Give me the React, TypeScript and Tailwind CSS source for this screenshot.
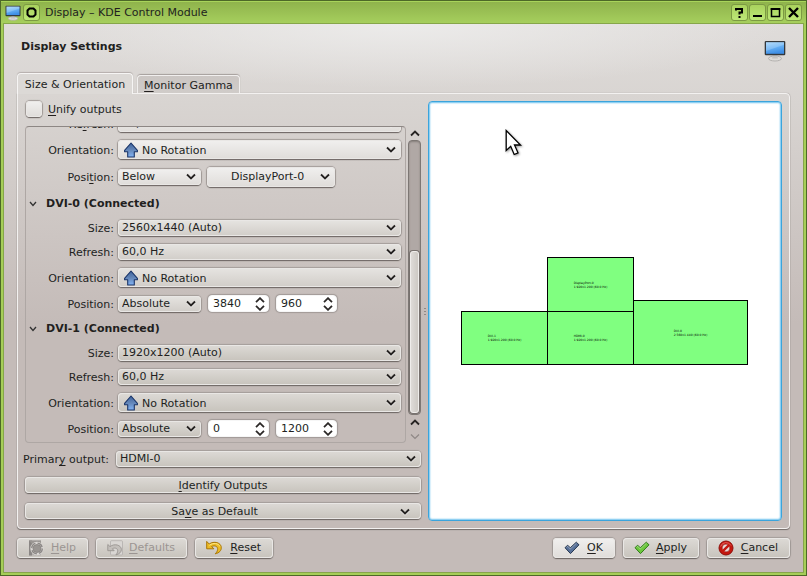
import React from "react";

const light = "bg-linear-to-b from-[#f1f0ef] to-[#dfdcd9]";
const mid = "bg-linear-to-b from-[#e6e4e1] to-[#d1cdc8]";
const dark = "bg-linear-to-b from-[#dddad6] to-[#c7c3bc]";
const raised =
  "rounded-[4px] shadow-[inset_0_0_0_1px_#e9e7e5,0_1px_1px_#6f6865,0_0_1px_1px_#a59e9b]";

const Key = ({ children }: { children: React.ReactNode }) => (
  <span className="underline underline-offset-2">{children}</span>
);

const Chevron = ({ className = "" }: { className?: string }) => (
  <svg viewBox="0 0 10 8" className={`h-2 w-[10px] shrink-0 ${className}`}>
    <path d="M1 2.5 5 6.3 9 2.5" fill="none" stroke="#fff" strokeOpacity="0.6" strokeWidth="2" />
    <path d="M1 1.5 5 5.5 9 1.5" fill="none" stroke="#262322" strokeWidth="1.8" />
  </svg>
);

const MonitorIcon = ({ className }: { className: string }) => (
  <svg viewBox="0 0 22 22" className={className}>
    <defs>
      <linearGradient id="screen" x1="0" y1="0" x2="0.3" y2="1">
        <stop offset="0" stopColor="#9fd2fb" />
        <stop offset="0.5" stopColor="#6ab3f5" />
        <stop offset="1" stopColor="#3f8fe6" />
      </linearGradient>
    </defs>
    <ellipse cx="11" cy="18.5" rx="6.5" ry="2.5" fill="#dddbd9" stroke="#aaa7a5" strokeWidth="0.8" />
    <path d="M9 15h4l1 3.5H8z" fill="#c4c2c0" />
    <rect x="0.7" y="0.9" width="20.6" height="14.4" rx="1.2" fill="#34383c" />
    <rect x="2" y="2.2" width="18" height="11.6" fill="url(#screen)" />
    <path d="M2 2.2h18v2.6L2 11z" fill="#fff" fillOpacity="0.2" />
  </svg>
);

const ArrowUp = () => (
  <svg viewBox="0 0 14 16" className="pointer-events-none absolute left-[6px] top-[2px] h-4 w-[14px]">
    <defs>
      <linearGradient id="arrow" x1="0" y1="0" x2="0" y2="1">
        <stop offset="0" stopColor="#3e629c" />
        <stop offset="0.5" stopColor="#6487b9" />
        <stop offset="1" stopColor="#83b4f5" />
      </linearGradient>
    </defs>
    <path
      d="M7 1 13.4 8.3v1.5H10.3v5.2H3.7V9.8H.6V8.3z"
      fill="url(#arrow)"
      stroke="#1b3568"
      strokeWidth="1.1"
      strokeLinejoin="round"
    />
  </svg>
);

type ComboProps = {
  id: string;
  value: string;
  tone: string;
  size?: string;
  arrow?: boolean;
};

const Combo = ({ id, value, tone, size = "h-4 flex-1", arrow }: ComboProps) => (
  <div className={`relative ${size}`}>
    <select
      id={id}
      defaultValue={value}
      className={`block h-full w-full appearance-none ${arrow ? "pl-6 pt-[2px]" : "pb-[2px] pl-1"} ${raised} ${tone}`}
    >
      <option>{value}</option>
    </select>
    {arrow && <ArrowUp />}
    <Chevron className="pointer-events-none absolute right-[5px] top-1/2 -translate-y-1/2" />
  </div>
);

const Spin = ({ label, value }: { label: string; value: string }) => (
  <div className="relative h-[17px] w-[61px]">
    <input
      aria-label={label}
      defaultValue={value}
      className="block h-full w-full rounded-[4px] border border-[#f6f6f6] bg-white pl-1 shadow-[0_0_1px_1px_#a19a97]"
    />
    <svg viewBox="0 0 10 14" className="pointer-events-none absolute right-1 top-[2px] h-[14px] w-[10px]">
      <path
        d="M1 5.2 5 1.2 9 5.2M1 8.8 5 12.8 9 8.8"
        fill="none"
        stroke="#2b2827"
        strokeWidth="1.8"
      />
    </svg>
  </div>
);

const Row = ({
  id,
  label,
  children,
}: {
  id: string;
  label: React.ReactNode;
  children: React.ReactNode;
}) => (
  <div className="flex shrink-0 items-center gap-1">
    <label htmlFor={id} className="h-4 w-[88px] text-right leading-[18px]">
      {label}
    </label>
    {children}
  </div>
);

const OutputHeader = ({ name }: { name: string }) => (
  <h3 className="flex h-[33px] shrink-0 items-center pl-[3px] font-bold">
    <svg viewBox="0 0 8 6" className="mr-[9px] h-[6px] w-2">
      <path d="M1 1 4 4.5 7 1" fill="none" stroke="#333" strokeWidth="1.3" />
    </svg>
    {name} (Connected)
  </h3>
);

type OutputProps = {
  id: string;
  size: string;
  x: string;
  y: string;
  tone: string;
};

const OutputForm = ({ id, size, x, y, tone }: OutputProps) => (
  <div className="flex shrink-0 flex-col gap-2">
    <Row id={`${id}-size`} label="Size:">
      <Combo id={`${id}-size`} value={`${size} (Auto)`} tone={tone} />
    </Row>
    <Row id={`${id}-refresh`} label="Refresh:">
      <Combo id={`${id}-refresh`} value="60,0 Hz" tone={tone} />
    </Row>
    <Row id={`${id}-orientation`} label="Orientation:">
      <Combo
        id={`${id}-orientation`}
        value="No Rotation"
        tone={tone}
        size="h-[19px] flex-1"
        arrow
      />
    </Row>
    <Row id={`${id}-position`} label="Position:">
      <Combo id={`${id}-position`} value="Absolute" tone={tone} size="mr-[3px] h-4 w-[83px]" />
      <div className="flex gap-[7px]">
        <Spin label="X position" value={x} />
        <Spin label="Y position" value={y} />
      </div>
    </Row>
  </div>
);

const ScrollArrow = ({ d, faded }: { d: string; faded?: boolean }) => (
  <button type="button" aria-label="Scroll" className="flex h-[14px] w-full items-center justify-center">
    <svg viewBox="0 0 10 7" className="h-[7px] w-[10px]">
      <path d={d} fill="none" stroke={faded ? "#8f8886" : "#262322"} strokeWidth={faded ? 1.2 : 1.8} />
    </svg>
  </button>
);

const ScrollBar = () => (
  <div className="flex w-[13px] flex-col">
    <ScrollArrow d="M1 5.5 5 1.5 9 5.5" />
    <div className="flex flex-1 flex-col justify-end rounded-[4px] border border-[#7d7774] bg-[#b0a8a5] p-px shadow-[inset_0_1px_2px_#857e7b]">
      <div className="h-[162px] rounded-[3px] border border-[#efedeb] bg-linear-to-r from-[#dedbd8] to-[#cdc9c4] shadow-[0_0_0_1px_#77716e]" />
    </div>
    <ScrollArrow d="M1 5.5 5 1.5 9 5.5" />
    <ScrollArrow d="M1 1.5 5 5.5 9 1.5" faded />
  </div>
);

const TitleButton = ({ label, children }: { label: string; children: React.ReactNode }) => (
  <button
    type="button"
    aria-label={label}
    className="flex h-[17px] w-[17px] items-center justify-center rounded-[3px] border border-[#7c9a43] bg-linear-to-b from-[#a9d25d] to-[#bde877]"
  >
    <svg viewBox="0 0 13 13" className="h-[13px] w-[13px]" fill="none" stroke="#000" strokeWidth="2">
      {children}
    </svg>
  </button>
);

const Screen = ({ name, mode, place }: { name: string; mode: string; place: string }) => (
  <div
    className={`absolute flex items-center justify-center border border-black bg-[#80ff80] ${place}`}
  >
    <p className="whitespace-nowrap text-[3px] leading-[4px] text-black">
      {name}
      <br />
      {mode} (60.0 Hz)
    </p>
  </div>
);

const DialogButton = ({
  icon,
  width,
  tone = dark,
  disabled,
  children,
}: {
  icon: React.ReactNode;
  width: string;
  tone?: string;
  disabled?: boolean;
  children: React.ReactNode;
}) => (
  <button
    type="button"
    disabled={disabled}
    className={`flex h-5 items-center justify-between pl-[11px] pr-3 disabled:text-[#9b9592] ${width} ${raised} ${tone}`}
  >
    {icon}
    <span>{children}</span>
  </button>
);

const HelpIcon = () => (
  <svg viewBox="0 0 16 16" className="h-4 w-4">
    <path d="M1 .5h12v15H1z" fill="#b3afac" />
    <path d="M1 .5h3v15H1z" fill="#8a8684" />
    <path d="M1 .5h12v3L5 5z" fill="#9a9693" />
    <circle cx="9" cy="8.5" r="5.3" fill="#dad7d4" stroke="#dad7d4" strokeWidth="2.8" />
    <circle cx="9" cy="8.5" r="5.3" fill="none" stroke="#8b8785" strokeWidth="1.4" strokeDasharray="6 2.32" />
    <circle cx="9" cy="8.5" r="4" fill="#999592" stroke="#85817f" strokeWidth="0.8" />
  </svg>
);

const DefaultsIcon = () => (
  <svg viewBox="0 0 16 16" className="h-4 w-4">
    <rect x="3.5" y="0.7" width="12" height="14.3" rx="1" fill="#d9d6d3" stroke="#b3afac" strokeWidth="0.8" />
    <path
      d="M.8 4.5v6.2h6.4L5.3 8.8c2.7-1.6 5.7-.4 5.4 2.4-.1 1.3-.8 2.6-1.8 3.7 3.6-.8 5.6-3.1 5.5-5.5C14.2 5 7.5 3.1 3 6.6z"
      fill="#c3bfbb"
      stroke="#989491"
      strokeWidth="0.9"
      strokeLinejoin="round"
    />
  </svg>
);

const ResetIcon = () => (
  <svg viewBox="0 0 16 16" className="h-4 w-4">
    <path
      d="M.7 1.4v7.4h7.2L5.6 6.5C9 4.9 12 6.5 11.6 9.6c-.2 1.6-1 2.9-2.4 4.2 4-.7 6.3-3.4 6.1-6.3C15 2.4 7.8.7 3.2 4z"
      fill="#edbb25"
      stroke="#a87606"
      strokeWidth="1"
      strokeLinejoin="round"
    />
    <path d="M3.3 5.3C7.5 2.3 12.5 3.3 14 6.5" fill="none" stroke="#fbe88a" strokeWidth="1" />
  </svg>
);

const CheckIcon = ({ fill, stroke }: { fill: string; stroke: string }) => (
  <svg viewBox="0 0 16 14" className="h-[14px] w-4">
    <path
      d="M1 6.7 3.7 4.2 6.3 6.8 12.3 1.2 15 3.8 6.5 12.6z"
      fill={fill}
      stroke={stroke}
      strokeWidth="1"
      strokeLinejoin="round"
    />
    <path d="M2.6 6.2 3.7 5.2 6.3 8 12.4 2.3" fill="none" stroke="#fff" strokeOpacity="0.35" strokeWidth="1" />
  </svg>
);

const CancelIcon = () => (
  <svg viewBox="0 0 16 16" className="h-4 w-4">
    <circle cx="8" cy="8" r="7" fill="#c5170f" stroke="#8e0d08" />
    <circle cx="8" cy="8" r="3.9" fill="#e8dcd9" stroke="#8e0d08" strokeWidth="0.6" />
    <path d="M4.6 11.4 11.4 4.6" stroke="#c5170f" strokeWidth="2.4" />
    <path d="M2.6 6.5A5.7 5.7 0 0 1 13 5.5" fill="none" stroke="#e8665f" strokeWidth="0.9" />
  </svg>
);

const App = () => {
  return (
    <div className="flex min-h-screen flex-col border border-[#4d6827] bg-[#a5ce58] font-['DejaVu_Sans',sans-serif] text-[11px] leading-4 text-[#221f1e]">
      <header className="flex h-[22px] items-center gap-px border-t border-[#a8d45a] bg-linear-to-b from-[#8fb34c] to-[#a6cf5d] px-1">
        <MonitorIcon className="mr-px h-4 w-4" />
        <TitleButton label="Window menu">
          <path d="M4.5 2.5h4L10.5 4.500v4L8.5 10.5h-4L2.5 8.5v-4z" />
        </TitleButton>
        <h1 className="flex-1 pl-1">Display – KDE Control Module</h1>
        <TitleButton label="Help">
          <path d="M3 4.5V3h6v3.5H6.5V8.5M6.5 10v2" />
        </TitleButton>
        <TitleButton label="Minimize">
          <path d="M2 10h9" />
        </TitleButton>
        <TitleButton label="Maximize">
          <path d="M2.5 3h8v7.5h-8z" strokeWidth="1.5" />
          <path d="M1.7 3h9.6" />
        </TitleButton>
        <TitleButton label="Close">
          <path d="M2 2 11 11M11 2 2 11" strokeWidth="2.4" />
        </TitleButton>
      </header>

      <main className="mx-[2px] mb-[2px] flex flex-1 flex-col border border-[#86a64a] bg-[radial-gradient(ellipse_380px_64px_at_50%_0,#ecebea,transparent),linear-gradient(#dfdcda,#d8d4d1_80px,#c4bbb8_300px)] px-[13px] pb-[14px]">
        <div className="flex h-[49px] items-center justify-between pl-1 pr-1">
          <h2 className="pb-1 font-bold">Display Settings</h2>
          <MonitorIcon className="mt-1 h-[22px] w-[22px]" />
        </div>

        <div role="tablist" className="relative z-10 -mb-px flex items-end gap-1">
          <button
            type="button"
            role="tab"
            aria-selected="true"
            className="h-[21px] w-[116px] rounded-t-[4px] border border-b-0 border-[#f6f5f4] bg-[#dcd9d6] pt-[2px] shadow-[0_-1px_1px_#b5afac]"
          >
            Size &amp; Orientation
          </button>
          <button
            type="button"
            role="tab"
            aria-selected="false"
            className="mb-px h-[18px] w-[103px] rounded-t-[4px] border border-b-0 border-[#f1efee] bg-linear-to-b from-[#cbc6c3] to-[#d0ccc9] pt-[2px] shadow-[0_-1px_1px_#a59f9c]"
          >
            <Key>M</Key>onitor Gamma
          </button>
        </div>

        <section className="flex flex-1 rounded-[4px] rounded-tl-none border border-[#f3f1f0] p-[7px] shadow-[0_1px_1px_#746d6a,0_0_1px_#8a8481]">
          <div className="flex w-[396px] shrink-0 flex-col">
            <label className="flex h-[25px] items-start gap-[6px] pl-px leading-[18px]">
              <input
                type="checkbox"
                className={`h-4 w-4 appearance-none ${raised} ${light}`}
              />
              <span>
                <Key>U</Key>nify outputs
              </span>
            </label>

            <div className="flex h-[317px] gap-[2px]">
              <div className="flex flex-1 flex-col justify-end overflow-hidden rounded-[4px] border border-[#aea7a4] border-t-[#8d8784] pb-[5px] pr-1">
                <div className="flex flex-col gap-2">
                  <Row
                    id="dp0-refresh"
                    label={
                      <>
                        Re<Key>f</Key>resh:
                      </>
                    }
                  >
                    <Combo id="dp0-refresh" value="60,0 Hz" tone={light} />
                  </Row>
                  <Row id="dp0-orientation" label="Orientation:">
                    <Combo
                      id="dp0-orientation"
                      value="No Rotation"
                      tone={light}
                      size="h-[19px] flex-1"
                      arrow
                    />
                  </Row>
                  <Row
                    id="dp0-position"
                    label={
                      <>
                        Posi<Key>t</Key>ion:
                      </>
                    }
                  >
                    <Combo
                      id="dp0-position"
                      value="Below"
                      tone={light}
                      size="mr-[2px] h-4 w-[83px]"
                    />
                    <button
                      type="button"
                      className={`flex h-5 w-[128px] items-center justify-between pl-6 pr-[5px] ${raised} ${light}`}
                    >
                      DisplayPort-0
                      <Chevron />
                    </button>
                  </Row>
                </div>
                <OutputHeader name="DVI-0" />
                <OutputForm id="dvi0" size="2560x1440" x="3840" y="960" tone={mid} />
                <OutputHeader name="DVI-1" />
                <OutputForm id="dvi1" size="1920x1200" x="0" y="1200" tone={dark} />
              </div>
              <ScrollBar />
            </div>

            <div className="mt-2 flex flex-col gap-[10px]">
              <div className="flex items-center justify-between">
                <label htmlFor="primary" className="-ml-[2px] h-4 whitespace-nowrap leading-[18px]">
                  Primar<Key>y</Key> output:
                </label>
                <Combo id="primary" value="HDMI-0" tone={dark} size="h-4 w-[305px]" />
              </div>
              <button type="button" className={`h-4 pt-[2px] leading-[14px] ${raised} ${dark}`}>
                <Key>I</Key>dentify Outputs
              </button>
              <button
                type="button"
                className={`flex h-4 items-center pl-1 pr-[11px] pt-[2px] leading-[14px] ${raised} ${dark}`}
              >
                <span className="flex-1">
                  Sa<Key>v</Key>e as Default
                </span>
                <Chevron />
              </button>
            </div>
          </div>

          <div className="flex w-[7px] flex-col items-center justify-center gap-[2px]">
            <span className="h-px w-[2px] bg-[#8f8986]" />
            <span className="h-px w-[2px] bg-[#8f8986]" />
            <span className="h-px w-[2px] bg-[#8f8986]" />
          </div>

          <div className="relative flex flex-1 items-center justify-center rounded-[4px] border border-[#3ba4dc] bg-white shadow-[inset_0_0_0_1px_#8fd0f2,inset_0_0_1px_2px_#d8effb]">
            <div className="relative h-[108px] w-[288px]">
              <Screen name="DisplayPort-0" mode="1 920x1 200" place="left-[86px] top-0 h-[55px] w-[87px]" />
              <Screen name="DVI-1" mode="1 920x1 200" place="left-0 top-[54px] h-[54px] w-[87px]" />
              <Screen name="HDMI-0" mode="1 920x1 200" place="left-[86px] top-[54px] h-[54px] w-[87px]" />
              <Screen name="DVI-0" mode="2 560x1 440" place="left-[172px] top-[43px] h-[65px] w-[115px]" />
            </div>
            <svg viewBox="0 0 18 28" className="absolute left-[76px] top-[27px] h-7 w-[18px] drop-shadow-[1px_1px_1px_#00000066]">
              <path
                d="M1.2 1.5v20l4.5-4.2 3.5 8.2 3.8-1.7-3.5-7.8h6z"
                fill="#fff"
                stroke="#000"
                strokeWidth="1.3"
              />
            </svg>
          </div>
        </section>

        <footer className="mt-[9px] flex gap-2">
          <DialogButton width="w-[71px]" disabled icon={<HelpIcon />}>
            <Key>H</Key>elp
          </DialogButton>
          <DialogButton width="w-[91px]" disabled icon={<DefaultsIcon />}>
            <Key>D</Key>efaults
          </DialogButton>
          <DialogButton width="w-[78px]" icon={<ResetIcon />}>
            <Key>R</Key>eset
          </DialogButton>
          <div className="flex-1" />
          <DialogButton width="w-[62px]" tone={light} icon={<CheckIcon fill="#587199" stroke="#24364f" />}>
            <Key>O</Key>K
          </DialogButton>
          <DialogButton width="w-[76px]" icon={<CheckIcon fill="#6cc83c" stroke="#2e7a17" />}>
            <Key>A</Key>pply
          </DialogButton>
          <DialogButton width="w-[83px]" icon={<CancelIcon />}>
            <Key>C</Key>ancel
          </DialogButton>
        </footer>
      </main>
    </div>
  );
};

export default App;
